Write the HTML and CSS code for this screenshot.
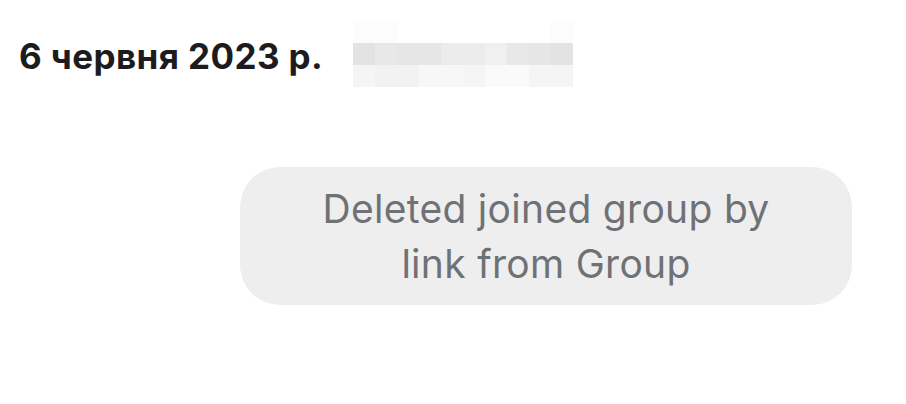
FILE: index.html
```html
<!DOCTYPE html>
<html lang="en">
<head>
  <meta charset="UTF-8">
  <meta name="viewport" content="width=device-width, initial-scale=1">
  <title>Chat</title>
  <link rel="stylesheet" href="styles.css">
</head>
<body>
  <div class="chat">
    <div class="day-header">
      <span class="day-date">6 червня 2023 р.</span>
      <!-- blurred sender name -->
      <div class="blur-name">
        <i class="p1"></i><i class="p1"></i><i></i><i></i><i></i><i></i><i></i><i></i><i></i><i class="p1"></i>
        <i class="g3"></i><i class="g5"></i><i class="g4"></i><i class="g4"></i><i class="g6"></i><i class="g6"></i><i class="g7"></i><i class="g5"></i><i class="g4"></i><i class="g3"></i>
        <i class="l2"></i><i class="l1"></i><i class="l1"></i><i class="l3"></i><i class="l3"></i><i class="l2"></i><i class="l4"></i><i class="l4"></i><i class="l2"></i><i class="l2"></i>
      </div>
    </div>

    <div class="service-row">
      <div class="service-msg">Deleted joined group by link from Group</div>
    </div>
  </div>
</body>
</html>
```

FILE: styles.css
```css
* {
  margin: 0;
  padding: 0;
  box-sizing: border-box;
  font-family: Inter, "Noto Sans", sans-serif;
}

body, html {
  height: 100%;
  background: #fff;
}

.chat {
  padding: 21px 0 0 19px;
}

.day-header {
  display: flex;
  align-items: center;
  gap: 30px;
}

.day-date {
  font-size: 35px;
  font-weight: 700;
  letter-spacing: 0.4px;
  color: #1c1c1e;
  margin-top: 4px;
}

.blur-name {
  display: grid;
  grid-template-columns: repeat(10, 22px);
  grid-auto-rows: 22px;
}

.blur-name i {
  background: #fff;
}

.blur-name .p1 { background: #fcfcfc; }
.blur-name .g3 { background: #e3e3e3; }
.blur-name .g4 { background: #e6e6e6; }
.blur-name .g5 { background: #e8e8e8; }
.blur-name .g6 { background: #ececec; }
.blur-name .g7 { background: #f0f0f0; }
.blur-name .l1 { background: #f2f2f2; }
.blur-name .l2 { background: #f5f5f5; }
.blur-name .l3 { background: #f7f7f7; }
.blur-name .l4 { background: #fafafa; }

.service-row {
  display: flex;
  justify-content: flex-end;
  padding-right: 54px;
  margin-top: 80px;
}

.service-msg {
  width: 612px;
  padding: 14px 60px;
  border-radius: 40px;
  background: #eeeeee;
  color: #6e7276;
  font-size: 39px;
  letter-spacing: 0.3px;
  line-height: 55px;
  text-align: center;
}
```
